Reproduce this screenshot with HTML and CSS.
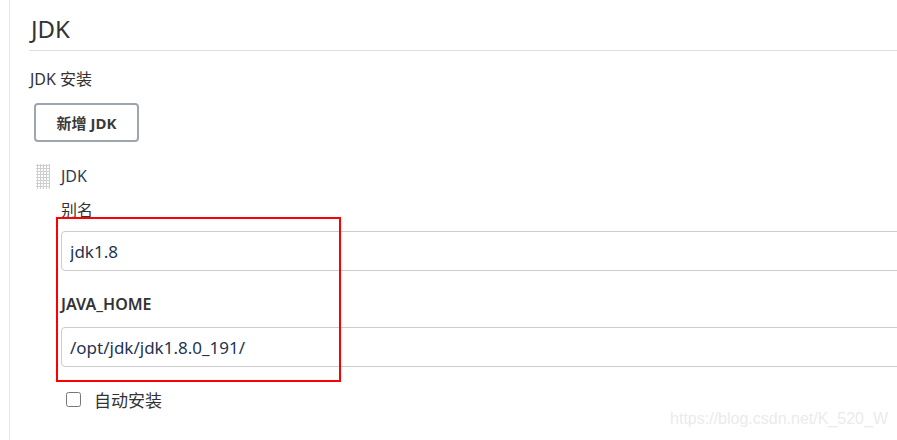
FILE: index.html
```html
<!DOCTYPE html>
<html lang="zh">
<head>
  <meta charset="UTF-8">
  <title>JDK</title>
  <link rel="stylesheet" href="styles.css">
</head>
<body>
  <div class="page">
    <h1 class="section-title">JDK</h1>

    <div class="setting-name">JDK 安装</div>
    <button type="button" class="btn-add">新增 JDK</button>

    <!-- 已添加的 JDK 安装项 -->
    <div class="repeated">
      <div class="repeated-head">
        <span class="handle"></span>
        <span class="repeated-title">JDK</span>
      </div>

      <div class="field">
        <label for="jdkName">别名</label>
        <input type="text" id="jdkName" value="jdk1.8">
      </div>

      <div class="field">
        <label for="jdkHome" class="strong">JAVA_HOME</label>
        <input type="text" id="jdkHome" value="/opt/jdk/jdk1.8.0_191/">
      </div>

      <label class="check">
        <input type="checkbox">
        <span>自动安装</span>
      </label>
    </div>
  </div>

  <!-- 截图标注 -->
  <div class="mark"></div>
  <div class="watermark">https://blog.csdn.net/K_520_W</div>
</body>
</html>
```

FILE: styles.css
```css
html, body {
  margin: 0;
  height: 100%;
  overflow: hidden;
}
body {
  font-family: "Noto Sans", "Noto Sans CJK SC", sans-serif;
  background: #fff;
  color: #333;
  position: relative;
}
.page {
  margin-left: 9px;
  border-left: 1px solid #e8e8e8;
  padding-left: 19px;
  min-height: 100%;
}
.section-title {
  margin: 0;
  padding: 13px 0 5px 2px;
  font-size: 24px;
  font-weight: normal;
  line-height: 32px;
  border-bottom: 1px solid #ddd;
}
.setting-name {
  margin-top: 17px;
  padding-left: 1px;
  font-size: 16px;
  line-height: 22px;
}
.btn-add {
  display: block;
  margin: 13px 0 0 5px;
  width: 105px;
  height: 39px;
  background: #fff;
  border: 2px solid #9ea6ad;
  border-radius: 4px;
  font-family: inherit;
  font-size: 15px;
  font-weight: bold;
  color: #3a3a3a;
  padding: 0;
}
.repeated {
  margin-top: 21px;
  margin-left: 7px;
  margin-right: -40px;
}
.repeated-head {
  display: flex;
  align-items: center;
  gap: 11px;
  height: 26px;
}
.handle {
  width: 14px;
  height: 25px;
  background-image: radial-gradient(circle, #cfcfcf 1px, transparent 1.2px);
  background-size: 3px 3px;
}
.repeated-title {
  font-size: 16px;
  color: #2d3b55;
}
.field {
  margin-left: 25px;
}
.field label {
  display: block;
  font-size: 16px;
  line-height: 22px;
  margin-top: 10px;
  margin-bottom: 10px;
}
.field label.strong {
  font-weight: 600;
  margin-top: 22px;
  margin-bottom: 12px;
}
.field input {
  display: block;
  box-sizing: border-box;
  width: 100%;
  height: 40px;
  border: 1px solid #ccc;
  border-radius: 4px;
  padding: 0 8px;
  font-family: inherit;
  font-size: 17px;
  color: #1f3450;
  margin: 0;
}
.check {
  display: flex;
  align-items: center;
  gap: 13px;
  margin: 20px 0 0 30px;
  font-size: 17px;
}
.check input {
  margin: 0;
  width: 15px;
  height: 15px;
}
.mark {
  position: absolute;
  left: 56px;
  top: 217px;
  width: 281px;
  height: 161px;
  border: 2px solid #f00;
}
.watermark {
  position: absolute;
  right: 9px;
  top: 410px;
  font-family: "Liberation Sans", sans-serif;
  font-size: 16px;
  color: #ebebeb;
}
```
